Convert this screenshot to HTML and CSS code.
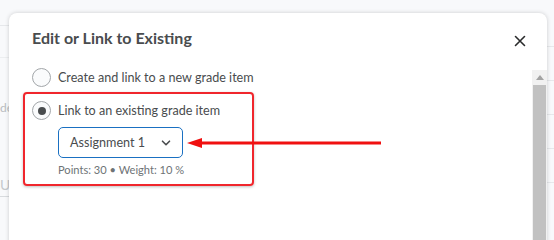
FILE: index.html
```html
<!DOCTYPE html>
<html>
<head>
<meta charset="utf-8">
<link rel="stylesheet" href="styles.css">
</head>
<body>
<div class="page">
  <div class="bg-top"></div>
  <div class="bg-row"><span class="bg-text">de</span></div>
  <div class="bg-input"><span>U</span></div>
</div>
<div class="bg-right">
  <div class="bg-line"></div><div class="bg-line"></div><div class="bg-line"></div><div class="bg-line"></div><div class="bg-line"></div>
</div>

<div class="dialog">
  <div class="dlg-header">
    <h1 class="dlg-title">Edit or Link to Existing</h1>
    <button class="dlg-close" aria-label="Close">
      <svg width="12" height="12" viewBox="0 0 12 12"><path d="M1.5 1.5 L10.5 10.5 M10.5 1.5 L1.5 10.5" stroke="#2a2b2c" stroke-width="1.6" stroke-linecap="round" fill="none"/></svg>
    </button>
  </div>
  <div class="dlg-body">
    <div class="dlg-content">
      <label class="radio-row"><span class="radio"></span><span>Create and link to a new grade item</span></label>
      <div class="highlight">
        <label class="radio-row"><span class="radio checked"></span><span>Link to an existing grade item</span></label>
        <div class="select">
          <span>Assignment 1</span>
          <svg width="10" height="6" viewBox="0 0 10 6"><path d="M1.5 1.2 L5 4.7 L8.5 1.2" stroke="#494c4e" stroke-width="1.6" stroke-linecap="round" stroke-linejoin="round" fill="none"/></svg>
        </div>
        <div class="meta">Points: 30 • Weight: 10 %</div>
      </div>
    </div>
    <div class="scrollbar">
      <div class="sb-up"><svg width="8" height="5" viewBox="0 0 8 5"><path d="M0 5 L4 0 L8 5 Z" fill="#a3a3a3"/></svg></div>
      <div class="sb-thumb"></div>
    </div>
  </div>
</div>

<svg class="arrow" width="196" height="14" viewBox="0 0 196 14">
  <line x1="12" y1="7" x2="194" y2="7" stroke="#f01010" stroke-width="3"/>
  <path d="M0 7 L15 2 L15 12 Z" fill="#f01010"/>
</svg>
</body>
</html>
```

FILE: styles.css
```css
html, body {
  margin: 0;
  padding: 0;
}
body {
  width: 554px;
  height: 240px;
  overflow: hidden;
  background: #f8f9fb;
  font-family: Lato, "Open Sans", sans-serif;
  position: relative;
}
.page {
  width: 9px;
  display: flex;
  flex-direction: column;
}
.bg-top {
  height: 25px;
  border-bottom: 1px solid #e6e8eb;
}
.bg-row {
  margin-top: 31px;
  height: 70px;
  border-top: 1px solid #eceef0;
  position: relative;
}
.bg-text {
  font-size: 12px;
  color: #b8bcc0;
  display: block;
  padding-top: 42px;
}
.bg-input {
  margin-top: 48px;
  height: 20px;
  border-bottom: 1px solid #d8dbde;
  font-size: 14px;
  color: #c6c9cc;
}
.bg-right {
  position: absolute;
  left: 547px;
  top: 46px;
  width: 7px;
  display: flex;
  flex-direction: column;
  gap: 33px;
}
.bg-line {
  height: 1px;
  background: #e6e8eb;
}
.dialog {
  position: absolute;
  left: 9px;
  top: 13px;
  width: 538px;
  height: 240px;
  background: #fff;
  border-radius: 8px 8px 0 0;
  box-shadow: 0 0 4px rgba(0,0,0,0.18);
  display: flex;
  flex-direction: column;
}
.dlg-header {
  height: 57px;
  display: flex;
  align-items: flex-start;
  justify-content: space-between;
  padding: 15px 21px 0 23px;
  box-sizing: border-box;
}
.dlg-title {
  margin: 0;
  font-size: 16px;
  font-weight: 700;
  color: #494c4e;
  line-height: 20px;
}
.dlg-close {
  border: 0;
  background: none;
  padding: 0;
  margin-top: 7px;
  width: 12px;
  height: 12px;
  display: flex;
}
.dlg-body {
  flex: 1;
  display: flex;
}
.dlg-content {
  flex: 1;
  padding: 0 0 0 14px;
}
.radio-row {
  display: flex;
  align-items: center;
  gap: 7px;
  font-size: 12.6px;
  color: #494c4e;
  height: 19px;
}
.dlg-content > .radio-row {
  margin-top: -2px;
  padding-left: 9px;
}
.radio {
  width: 17px;
  height: 17px;
  border: 1px solid #a2a6a9;
  border-radius: 50%;
  background: #fafbfc;
  display: flex;
  align-items: center;
  justify-content: center;
  flex: none;
}
.radio.checked::after {
  content: "";
  width: 8px;
  height: 8px;
  border-radius: 50%;
  background: #494c4e;
}
.highlight {
  margin-top: 5px;
  width: 220px;
  height: 83px;
  border: 2px solid #f0262c;
  border-radius: 4px;
  box-shadow: 0 1px 3px rgba(0,0,0,0.25);
  padding: 7px 0 0 7px;
  box-sizing: content-box;
}
.select {
  margin: 7px 0 0 26px;
  height: 29px;
  width: 101px;
  border: 1px solid #1a70c2;
  border-radius: 5px;
  box-sizing: content-box;
  display: flex;
  align-items: center;
  justify-content: space-between;
  padding: 0 11px 0 11px;
  font-size: 12.6px;
  color: #494c4e;
}
.meta {
  margin: 5px 0 0 26px;
  font-size: 11.1px;
  color: #6e7376;
}
.scrollbar {
  width: 15px;
  background: #f1f1f1;
  display: flex;
  flex-direction: column;
  align-items: center;
}
.sb-up {
  height: 15px;
  width: 15px;
  display: flex;
  align-items: center;
  justify-content: center;
}
.sb-thumb {
  width: 13px;
  flex: 1;
  background: #c1c1c1;
}
.arrow {
  position: absolute;
  left: 187px;
  top: 136px;
}
```
